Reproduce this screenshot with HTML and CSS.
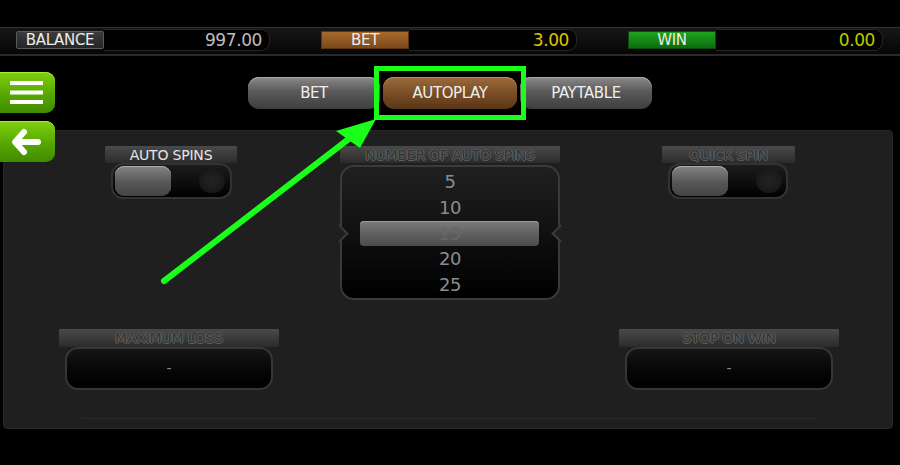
FILE: index.html
```html
<!DOCTYPE html>
<html>
<head>
<meta charset="utf-8">
<link rel="stylesheet" href="styles.css">
</head>
<body>
<div class="screen">
  <div class="topbar">
    <div class="meter">
      <div class="meter-label lbl-gray">BALANCE</div>
      <div class="meter-value val-gray">997.00</div>
    </div>
    <div class="meter">
      <div class="meter-label lbl-brown">BET</div>
      <div class="meter-value val-yellow">3.00</div>
    </div>
    <div class="meter">
      <div class="meter-label lbl-green">WIN</div>
      <div class="meter-value val-lime">0.00</div>
    </div>
  </div>

  <div class="side">
    <div class="side-btn">
      <svg width="55" height="41" viewBox="0 0 55 41"><rect x="10" y="9" width="33" height="4" fill="#fff"/><rect x="10" y="18.5" width="33" height="4" fill="#fff"/><rect x="10" y="28" width="33" height="4" fill="#fff"/></svg>
    </div>
    <div class="side-btn">
      <svg width="55" height="42" viewBox="0 0 55 42"><path d="M24 11 L15 21 L24 31" fill="none" stroke="#fff" stroke-width="6" stroke-linecap="round" stroke-linejoin="round"/><line x1="17" y1="21" x2="38" y2="21" stroke="#fff" stroke-width="6" stroke-linecap="round"/></svg>
    </div>
  </div>

  <div class="tabs">
    <div class="tab tab-gray">BET</div>
    <div class="tab tab-brown highlighted">AUTOPLAY</div>
    <div class="tab tab-gray">PAYTABLE</div>
  </div>

  <div class="panel">
    <div class="row row-top">
      <div class="group g-small">
        <div class="glabel glabel-lit">AUTO SPINS</div>
        <div class="toggle"><div class="knob"></div><div class="hole"></div></div>
      </div>
      <div class="group g-wide g-picker">
        <div class="glabel glabel-dim">NUMBER OF AUTO SPINS</div>
        <div class="picker">
          <div class="pick">5</div>
          <div class="pick">10</div>
          <div class="pick pick-sel">15</div>
          <div class="pick">20</div>
          <div class="pick">25</div>
        </div>
      </div>
      <div class="group g-small g-quick">
        <div class="glabel glabel-dim">QUICK SPIN</div>
        <div class="toggle"><div class="knob"></div><div class="hole"></div></div>
      </div>
    </div>
    <div class="row row-bottom">
      <div class="group g-wide">
        <div class="glabel glabel-dim tall">MAXIMUM LOSS</div>
        <div class="field">-</div>
      </div>
      <div class="group g-wide g-stop">
        <div class="glabel glabel-dim tall">STOP ON WIN</div>
        <div class="field">-</div>
      </div>
    </div>
    <div class="divider"></div>
  </div>

  <svg class="annot" width="900" height="465" viewBox="0 0 900 465">
    <line x1="164" y1="281" x2="350" y2="138" stroke="#1aff1a" stroke-width="6" stroke-linecap="round"/>
    <polygon points="376,119 336,131 360,148" fill="#1aff1a"/>
  </svg>
</div>
</body>
</html>
```

FILE: styles.css
```css
* { box-sizing: border-box; }
html, body { margin: 0; padding: 0; background: #000; }
body { font-family: "DejaVu Sans", "Liberation Sans", sans-serif; }
.screen { position: relative; width: 900px; height: 465px; overflow: hidden; background: #000; }

.topbar {
  margin-top: 27px;
  height: 29px;
  border-top: 1px solid #343434;
  border-bottom: 2px solid #2a2a2a;
  background: linear-gradient(#161616, #060606);
  display: flex;
  align-items: flex-start;
  gap: 51px;
  padding: 1px 0 0 16px;
}
.meter { display: flex; align-items: center; }
.meter:nth-child(1) { width: 254px; }
.meter:nth-child(2) { width: 256px; }
.meter:nth-child(3) { width: 255px; }
.meter-label {
  height: 18px;
  width: 88px;
  flex: none;
  font-size: 15px;
  line-height: 17px;
  text-align: center;
  color: #ececec;
  letter-spacing: -0.3px;
}
.lbl-gray { background: linear-gradient(#3c3c3c, #252525); border: 1px solid #5a5a5a; border-radius: 2px; }
.lbl-brown { background: linear-gradient(#a8692c, #7a491b); border: 1px solid #5a3510; }
.lbl-green { background: linear-gradient(#1fa41f, #0c6c0c); border: 1px solid #0a4a0a; }
.meter-value {
  flex: 1;
  height: 22px;
  background: #020202;
  border: 1px solid #272727;
  border-left: none;
  border-radius: 0 9px 9px 0;
  text-align: right;
  padding-right: 7px;
  font-size: 17px;
  line-height: 21px;
  letter-spacing: -0.4px;
}
.val-gray { color: #bdbdbd; }
.val-yellow { color: #e2c400; }
.val-lime { color: #bccb00; }

.side { position: absolute; left: 0; top: 72px; display: flex; flex-direction: column; gap: 8px; z-index: 2; }
.side-btn {
  width: 55px;
  height: 41px;
  border-radius: 0 9px 9px 0;
  background: linear-gradient(#80d010, #56a800 55%, #3f8a00);
  box-shadow: inset 0 1px 0 #a8e840;
}
.side-btn svg { display: block; }

.tabs { display: flex; justify-content: center; gap: 3px; margin-top: 21px; }
.tab {
  width: 132px;
  height: 32px;
  border-radius: 11px;
  font-size: 15px;
  line-height: 32px;
  text-align: center;
  color: #eee;
  letter-spacing: -0.4px;
}
.tab-gray { background: linear-gradient(#8a8a8a, #5a5a5a 45%, #3e3e3e); box-shadow: inset 0 1px 0 #aaa; }
.tab-brown { width: 134px; background: linear-gradient(#9c6a3c, #7a4e26 50%, #5a3616); box-shadow: inset 0 1px 0 #c08a58; }
.highlighted { position: relative; }
.highlighted::after {
  content: "";
  position: absolute;
  left: -9px; right: -9px; top: -11px; bottom: -11px;
  border: 5px solid #1aff1a;
}

.panel {
  margin: 21px 7px 0 3px;
  height: 299px;
  background: #1f1f1f;
  border: 1px solid #262626;
  border-radius: 4px;
  padding-top: 15px;
}
.row { display: flex; align-items: flex-start; }
.row-top { padding-left: 101px; }
.row-bottom { padding-left: 55px; margin-top: 29px; }

.group { display: flex; flex-direction: column; }
.g-small { width: 132px; }
.g-wide { width: 220px; }
.g-picker { margin-left: 103px; }
.g-quick { margin-left: 102px; width: 133px; }
.g-stop { margin-left: 340px; }

.glabel {
  height: 17px;
  background: linear-gradient(#4a4a4a, #2b2b2b);
  font-size: 14px;
  line-height: 18px;
  text-align: center;
  letter-spacing: -0.2px;
  border-radius: 1px;
  white-space: nowrap;
}
.glabel.tall { height: 18px; line-height: 19px; }
.glabel-lit { color: #e6e6e6; }
.glabel-dim {
  color: #333;
  text-shadow: 1px 0 0 #5e5e5e, -1px 0 0 #5e5e5e, 0 1px 0 #5e5e5e, 0 -1px 0 #555;
}

.toggle {
  position: relative;
  margin: 0 0 0 6px;
  width: 121px;
  height: 36px;
  border-radius: 12px;
  background: linear-gradient(#1c1c1c, #000);
  border: 2px solid #333;
  padding: 1px 2px;
  display: flex;
  align-items: center;
}
.knob {
  width: 56px;
  height: 30px;
  border-radius: 9px;
  background: linear-gradient(#858585, #5a5a5a 50%, #444);
  box-shadow: inset 0 1px 0 #aaa;
}
.hole {
  width: 26px;
  height: 24px;
  border-radius: 50%;
  margin-left: 28px;
  background: radial-gradient(#232323, #141414);
}
.g-quick .toggle { width: 120px; }

.picker {
  position: relative;
  margin-top: 2px;
  height: 135px;
  border: 2px solid #3a3a3a;
  border-radius: 14px;
  background: linear-gradient(#202020, #101010 50%, #000);
  padding-top: 2px;
}
.picker::before, .picker::after {
  content: "";
  position: absolute;
  top: 60px;
  width: 11px;
  height: 11px;
  background: #1f1f1f;
  transform: rotate(45deg);
}
.picker::before { left: -9px; border-top: 2px solid #3a3a3a; border-right: 2px solid #3a3a3a; }
.picker::after { right: -9px; border-bottom: 2px solid #3a3a3a; border-left: 2px solid #3a3a3a; }
.pick {
  height: 26px;
  line-height: 26px;
  text-align: center;
  font-size: 18px;
  color: #8c8c8c;
  letter-spacing: -0.5px;
}
.pick-sel {
  margin: 0 19px 0 18px;
  height: 25px;
  line-height: 25px;
  border-radius: 4px;
  background: linear-gradient(#7c7c7c, #5c5c5c 60%, #4c4c4c);
  box-shadow: inset 0 1px 0 #999;
  color: #666;
}

.field {
  margin: 0 6px;
  height: 43px;
  border-radius: 13px;
  border: 2px solid #363636;
  background: linear-gradient(#151515, #050505 60%, #000);
  text-align: center;
  line-height: 38px;
  font-size: 14px;
  color: #8a8a8a;
}

.divider { margin: 28px 75px 0 77px; height: 1px; background: #2a2a2a; }

.annot { position: absolute; left: 0; top: 0; pointer-events: none; z-index: 3; }
```
